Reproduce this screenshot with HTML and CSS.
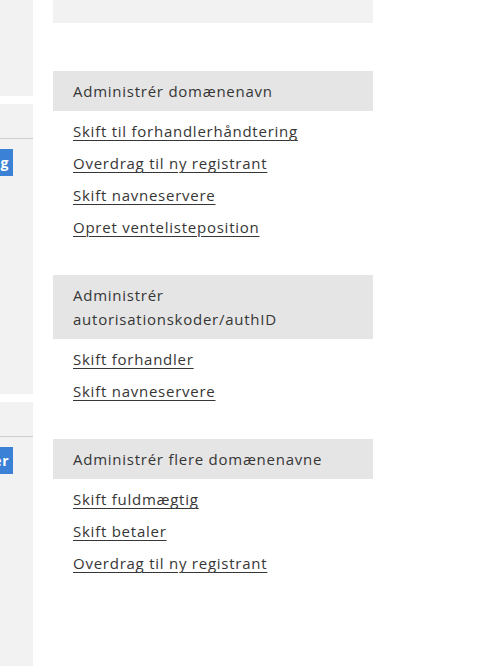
FILE: index.html
```html
<!DOCTYPE html>
<html lang="da">
<head>
<meta charset="utf-8">
<title>Administrér domænenavn</title>
<link rel="stylesheet" href="styles.css">
</head>
<body>
  <aside class="side">
    <div class="card card-first"></div>
    <div class="card card-mid">
      <div class="card-head"></div>
      <div class="card-actions"><button class="btn">Se registrering</button></div>
    </div>
    <div class="card card-last">
      <div class="card-head"></div>
      <div class="card-actions"><button class="btn">Skift forhandler</button></div>
    </div>
  </aside>

  <main class="main">
    <div class="top-box"></div>

    <section class="group">
      <h2 class="group-title">Administrér domænenavn</h2>
      <ul class="links">
        <li><a href="#">Skift til forhandlerhåndtering</a></li>
        <li><a href="#">Overdrag til ny registrant</a></li>
        <li><a href="#">Skift navneservere</a></li>
        <li><a href="#">Opret ventelisteposition</a></li>
      </ul>
    </section>

    <section class="group">
      <h2 class="group-title">Administrér autorisationskoder/authID</h2>
      <ul class="links">
        <li><a href="#">Skift forhandler</a></li>
        <li><a href="#">Skift navneservere</a></li>
      </ul>
    </section>

    <section class="group">
      <h2 class="group-title">Administrér flere domænenavne</h2>
      <ul class="links">
        <li><a href="#">Skift fuldmægtig</a></li>
        <li><a href="#">Skift betaler</a></li>
        <li><a href="#">Overdrag til ny registrant</a></li>
      </ul>
    </section>
  </main>
</body>
</html>
```

FILE: styles.css
```css
* {
  box-sizing: border-box;
}

html,
body {
  margin: 0;
  height: 666px;
  background: #ffffff;
}

body {
  display: flex;
  align-items: flex-start;
  overflow: hidden;
  font-family: "Open Sans", "Noto Sans", sans-serif;
  font-size: 15px;
  letter-spacing: 0.75px;
  color: #363636;
}

/* left column: cards clipped at the window edge */
.side {
  width: 33px;
  flex-shrink: 0;
  display: flex;
  flex-direction: column;
  gap: 8px;
  overflow: hidden;
  height: 666px;
}

.card {
  background: #f2f2f2;
  flex-shrink: 0;
}

.card-first {
  height: 96px;
}

.card-mid {
  height: 290px;
}

.card-last {
  flex: 1;
}

.card-head {
  height: 35px;
  border-bottom: 1px solid #cfcfcf;
}

.card-actions {
  display: flex;
  justify-content: flex-end;
  padding: 10px 20px 0 0;
}

.btn {
  flex-shrink: 0;
  white-space: nowrap;
  border: 0;
  margin: 0;
  height: 27px;
  padding: 0 4px 0 12px;
  background: #3b82d6;
  color: #ffffff;
  font-family: "Open Sans", sans-serif;
  font-size: 14px;
  font-weight: 700;
  letter-spacing: 0.5px;
}

/* main column */
.main {
  width: 320px;
  margin-left: 20px;
  flex-shrink: 0;
}

.top-box {
  height: 23px;
  background: #f2f2f2;
  margin-bottom: 48px;
}

.group {
  margin-bottom: 36px;
}

.group-title {
  margin: 0;
  padding: 8px 20px;
  background: #e5e5e5;
  font-size: 15px;
  font-weight: 400;
  line-height: 24px;
  color: #363636;
}

.links {
  list-style: none;
  margin: 0;
  padding: 8px 20px 0;
  display: flex;
  flex-direction: column;
  gap: 8px;
}

.links li {
  line-height: 24px;
}

.links a {
  color: #363636;
  text-decoration: underline;
  text-decoration-thickness: 1px;
  text-underline-offset: 3px;
}
```
